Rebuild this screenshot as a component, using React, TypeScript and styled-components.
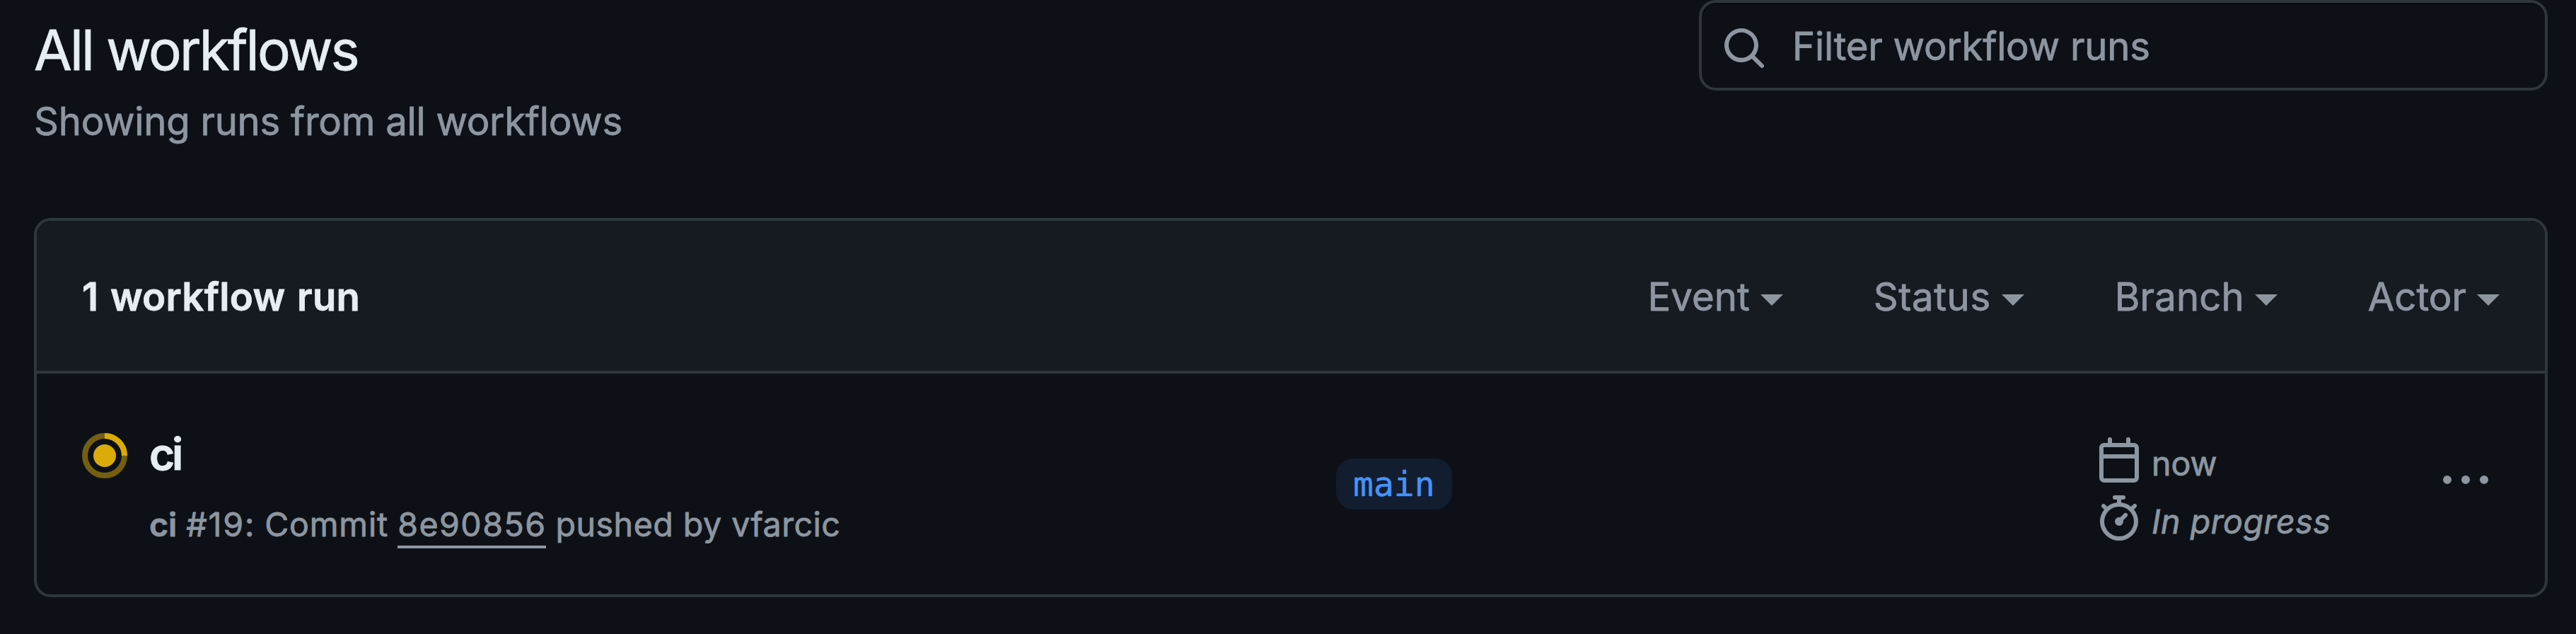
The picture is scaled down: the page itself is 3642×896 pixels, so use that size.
import React from 'react';
import styled, { createGlobalStyle } from 'styled-components';

const color = {
  canvas: '#0d1117',
  subtle: '#161b22',
  border: '#30363d',
  text: '#e6edf3',
  muted: '#8d96a0',
  accent: '#4493f8',
  accentMuted: '#121d2f',
  attention: '#dbab0a',
};

const GlobalStyle = createGlobalStyle`
  *, *::before, *::after { box-sizing: border-box; }
  body {
    margin: 0;
    background: ${color.canvas};
    color: ${color.text};
    font-family: Inter, "Liberation Sans", sans-serif;
    -webkit-text-stroke: 0.8px currentColor;
  }
`;

const Page = styled.main`
  width: 3642px;
  height: 896px;
  padding: 0 40px 0 48px;
  overflow: hidden;
  background: ${color.canvas};
`;

const PageHeader = styled.header`
  display: flex;
  justify-content: space-between;
  align-items: flex-start;
  height: 308px;
`;

const Heading = styled.div`
  padding-top: 11px;
`;

const Title = styled.h1`
  margin: 0;
  font-size: 78px;
  font-weight: 400;
  line-height: 120px;
  letter-spacing: -2.8px;
`;

const Subtitle = styled.p`
  margin: 0;
  font-size: 54.5px;
  line-height: 80px;
  letter-spacing: -0.28px;
  color: ${color.muted};
`;

const SearchBox = styled.label`
  display: flex;
  align-items: center;
  gap: 36px;
  width: 1200px;
  height: 128px;
  padding: 0 28px;
  border: 4px solid ${color.border};
  border-radius: 24px;
  box-shadow: inset 0 4px 0 #0a0d12;
  color: ${color.muted};

  svg { margin-top: 8px; }
`;

const SearchInput = styled.input`
  flex: 1;
  height: 84px;
  padding: 2px 0 0;
  border: 0;
  outline: 0;
  background: transparent;
  color: ${color.text};
  font-family: inherit;
  font-size: 54.5px;
  letter-spacing: -0.24px;

  &::placeholder {
    color: ${color.muted};
    opacity: 1;
    -webkit-text-stroke-color: ${color.muted};
  }
`;

const Card = styled.section`
  border: 4px solid ${color.border};
  border-radius: 24px;
  overflow: hidden;
`;

const CardHeader = styled.div`
  display: flex;
  align-items: center;
  justify-content: space-between;
  height: 216px;
  padding: 2px 64px 0;
  border-bottom: 4px solid ${color.border};
  background: ${color.subtle};
  font-size: 54.5px;
  line-height: 84px;
`;

const RunCount = styled.strong`
  font-weight: 600;
  letter-spacing: 0.3px;
  word-spacing: 2.5px;
`;

const Filters = styled.div`
  display: flex;
  gap: 128px;
`;

const FilterButton = styled.button<{ $tracking: number }>`
  display: flex;
  align-items: center;
  gap: 15px;
  padding: 0;
  border: 0;
  background: none;
  color: ${color.muted};
  font: inherit;
  letter-spacing: ${(p) => p.$tracking}px;
`;

const Caret = styled.span`
  margin-top: 10px;
  border: 16px solid transparent;
  border-top-color: currentColor;
  border-bottom-width: 0;
`;

const RunRow = styled.div`
  display: grid;
  grid-template-columns: 1773px 1075px 490px 64px;
  align-items: start;
  height: 312px;
  padding-left: 64px;
  color: ${color.muted};
`;

const RunMain = styled.div`
  display: flex;
  align-items: flex-start;
  gap: 31px;
  padding-top: 66px;

  > svg { margin-top: 18px; }
`;

const RunTitle = styled.h2`
  margin: 0 0 15px;
  font-size: 62px;
  font-weight: 600;
  line-height: 96px;
  letter-spacing: -4px;
  color: ${color.text};
`;

const RunDetail = styled.p`
  margin: 0;
  font-size: 46.5px;
  line-height: 72px;
  white-space: pre;

  b { font-weight: 600; }
`;

const Tracked = styled.span<{ $tracking: number }>`
  letter-spacing: ${(p) => p.$tracking}px;
`;

const CommitLink = styled.a`
  display: inline-block;
  height: 70px;
  border-bottom: 4px solid ${color.muted};
  letter-spacing: 1.48px;
`;

const Branch = styled.a`
  justify-self: start;
  margin-top: 120px;
  height: 72px;
  padding: 0 24px;
  border-radius: 24px;
  background: ${color.accentMuted};
  color: ${color.accent};
  font: 48px/72px "DejaVu Sans Mono", monospace;
  -webkit-text-stroke-width: 0.5px;
`;

const Meta = styled.div`
  display: flex;
  flex-direction: column;
  gap: 18px;
  padding-top: 90px;
`;

const MetaItem = styled.div<{ $italic?: boolean }>`
  display: flex;
  align-items: flex-start;
  gap: 14px;
  height: 64px;
  font-size: 46.5px;
  line-height: 64px;
  font-style: ${(p) => (p.$italic ? 'italic' : 'normal')};
  letter-spacing: ${(p) => (p.$italic ? '0.55px' : '0')};

  span { padding-top: 5px; white-space: nowrap; }
`;

const MenuButton = styled.button`
  margin-top: 120px;
  padding: 0;
  border: 0;
  background: none;
  color: inherit;
  height: 64px;
`;

const IconSvg = styled.svg`
  display: block;
  flex: none;
  width: 64px;
  height: 64px;
  fill: currentColor;
`;

const Icon = ({ d }: { d: string }) => (
  <IconSvg viewBox="0 0 16 16" aria-hidden="true">
    <path d={d} />
  </IconSvg>
);

const icons = {
  search:
    'M10.68 11.74a6 6 0 0 1-7.922-8.982 6 6 0 0 1 8.982 7.922l3.04 3.04a.749.749 0 0 1-.326 1.275.749.749 0 0 1-.734-.215ZM11.5 7a4.499 4.499 0 1 0-8.997 0A4.499 4.499 0 0 0 11.5 7Z',
  calendar:
    'M4.75 0a.75.75 0 0 1 .75.75V2h5V.75a.75.75 0 0 1 1.5 0V2h1.25c.966 0 1.75.784 1.75 1.75v10.5A1.75 1.75 0 0 1 13.25 16H2.75A1.75 1.75 0 0 1 1 14.25V3.75C1 2.784 1.784 2 2.75 2H4V.75A.75.75 0 0 1 4.75 0ZM2.5 7.5v6.75c0 .138.112.25.25.25h10.5a.25.25 0 0 0 .25-.25V7.5Zm10.75-4H2.75a.25.25 0 0 0-.25.25V6h11V3.75a.25.25 0 0 0-.25-.25Z',
  stopwatch:
    'M5.75.75A.75.75 0 0 1 6.5 0h3a.75.75 0 0 1 0 1.5h-.75v1l-.001.041a6.724 6.724 0 0 1 3.464 1.435l.007-.006.75-.75a.749.749 0 0 1 1.275.326.749.749 0 0 1-.215.734l-.75.75-.006.007a6.75 6.75 0 1 1-10.548 0L2.72 5.03l-.75-.75a.751.751 0 0 1 .018-1.042.751.751 0 0 1 1.042-.018l.75.75.007.006A6.72 6.72 0 0 1 7.25 2.541V2.5v-1H6.5a.75.75 0 0 1-.75-.75ZM8 14.5a5.25 5.25 0 1 0-.001-10.501A5.25 5.25 0 0 0 8 14.5Zm.389-6.7 1.33-1.33a.75.75 0 1 1 1.061 1.06L9.45 8.861A1.503 1.503 0 0 1 8 10.75a1.499 1.499 0 1 1 .389-2.95Z',
  kebab:
    'M8 9a1.5 1.5 0 1 0 0-3 1.5 1.5 0 0 0 0 3ZM1.5 9a1.5 1.5 0 1 0 0-3 1.5 1.5 0 0 0 0 3Zm13 0a1.5 1.5 0 1 0 0-3 1.5 1.5 0 0 0 0 3Z',
};

const RunningIcon = () => (
  <IconSvg viewBox="0 0 16 16" role="img" aria-label="currently running">
    <circle cx="8" cy="8" r="7" fill="none" stroke={color.attention} strokeWidth="2" opacity="0.5" />
    <path d="M8 1a7 7 0 0 1 7 7" fill="none" stroke={color.attention} strokeWidth="2" />
    <circle cx="8" cy="8" r="4" fill={color.attention} />
  </IconSvg>
);

const filters = [
  { label: 'Event', tracking: 0 },
  { label: 'Status', tracking: 0.6 },
  { label: 'Branch', tracking: 0.1 },
  { label: 'Actor', tracking: 0 },
];

export default function App() {
  return (
    <Page>
      <GlobalStyle />
      <PageHeader>
        <Heading>
          <Title>All workflows</Title>
          <Subtitle>Showing runs from all workflows</Subtitle>
        </Heading>
        <SearchBox>
          <Icon d={icons.search} />
          <SearchInput placeholder="Filter workflow runs" />
        </SearchBox>
      </PageHeader>
      <Card>
        <CardHeader>
          <RunCount>1 workflow run</RunCount>
          <Filters>
            {filters.map((f) => (
              <FilterButton key={f.label} $tracking={f.tracking}>
                <span>{f.label}</span>
                <Caret />
              </FilterButton>
            ))}
          </Filters>
        </CardHeader>
        <RunRow>
          <RunMain>
            <RunningIcon />
            <div>
              <RunTitle>ci</RunTitle>
              <RunDetail>
                <b>ci</b> <Tracked $tracking={1.8}>#19:</Tracked>{' '}
                <Tracked $tracking={0.85}>Commit</Tracked>{' '}
                <CommitLink>8e90856</CommitLink>{' '}
                <Tracked $tracking={0.52}>pushed by vfarcic</Tracked>
              </RunDetail>
            </div>
          </RunMain>
          <Branch>main</Branch>
          <Meta>
            <MetaItem>
              <Icon d={icons.calendar} />
              <span>now</span>
            </MetaItem>
            <MetaItem $italic>
              <Icon d={icons.stopwatch} />
              <span>In progress</span>
            </MetaItem>
          </Meta>
          <MenuButton aria-label="Show options">
            <Icon d={icons.kebab} />
          </MenuButton>
        </RunRow>
      </Card>
    </Page>
  );
}
